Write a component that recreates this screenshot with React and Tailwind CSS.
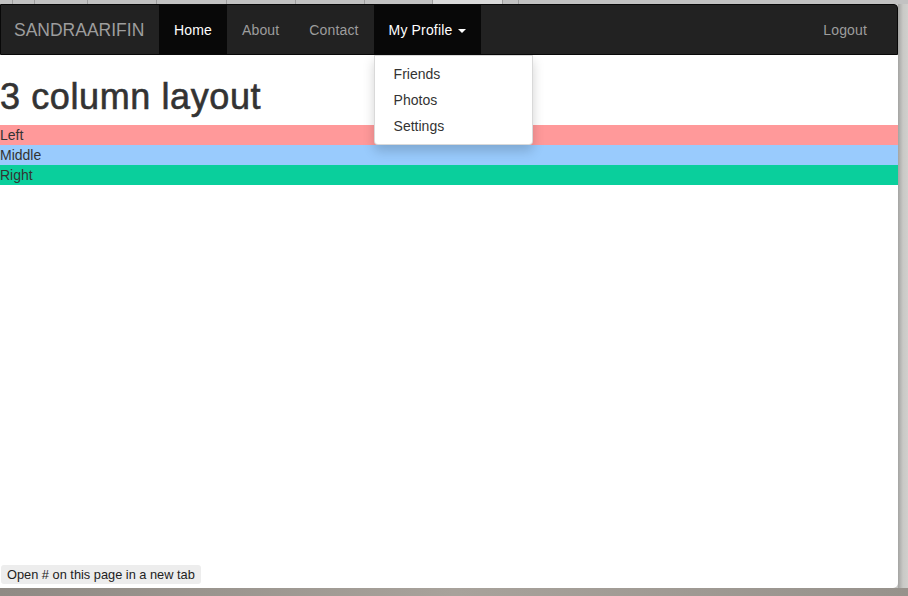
import React from "react";

const font = { fontFamily: '"Liberation Sans", Arial, sans-serif' };

const topLines = [13, 22, 53, 69, 70, 69, 69, 68, 70, 16];

const NavLink = ({ children, active }) => (
  <li
    className={
      "h-[49px] pt-[1px] px-[15px] leading-[48px] text-[14px] tracking-[0.15px] " +
      (active ? "bg-[#080808] text-white" : "text-[#9d9d9d]")
    }
  >
    {children}
  </li>
);

const rows = [
  { label: "Left", bg: "bg-[#ff999a]" },
  { label: "Middle", bg: "bg-[#99cbfd]" },
  { label: "Right", bg: "bg-[#0acf9c]" },
];

export default function App() {
  return (
    <div
      className="w-[908px] h-[596px] flex flex-col overflow-hidden bg-[#c6c6c4]"
      style={font}
    >
      {/* browser chrome behind window */}
      <div className="h-[4px] flex bg-[#c2c2c2]">
        {topLines.map((w, i) => (
          <div
            key={i}
            style={{ width: w }}
            className={
              "h-full border-r border-[#9e9e9e] " +
              (i === 8 ? "bg-[#dadada]" : "")
            }
          />
        ))}
      </div>

      <div className="flex h-[584px]">
        <div className="relative w-[898px] h-full bg-white rounded-tr-[4px] rounded-br-[5px]">
          <nav className="h-[51px] bg-[#222] border border-[#080808] rounded-tr-[4px] flex items-start">
            <div className="w-[158px] h-[49px] pt-[1px] pl-[13px] leading-[48px] text-[17.5px] text-[#9d9d9d]">
              SANDRAARIFIN
            </div>
            <ul className="flex">
              <NavLink active>Home</NavLink>
              <NavLink>About</NavLink>
              <NavLink>Contact</NavLink>
              <li className="relative h-[49px] pt-[1px] px-[15px] text-[14px] tracking-[0.15px] bg-[#080808] text-white flex items-center">
                My Profile
                <span className="ml-[6px] mt-[1px] w-0 h-0 border-x-[4px] border-x-transparent border-t-[4px] border-t-white" />
                <ul className="absolute left-0 top-[50px] w-[159px] py-[5px] bg-white border border-black/15 rounded-b-[4px] shadow-[0_6px_12px_rgba(0,0,0,0.175)] z-10 tracking-normal">
                  {["Friends", "Photos", "Settings"].map((t) => (
                    <li
                      key={t}
                      className="px-[19px] py-[3px] leading-[20px] text-[14px] text-[#333]"
                    >
                      {t}
                    </li>
                  ))}
                </ul>
              </li>
            </ul>
            <ul className="ml-auto pr-[15px] flex">
              <NavLink>Logout</NavLink>
            </ul>
          </nav>

          <h1 className="mt-[22px] mb-[8px] text-[36px] leading-[40px] text-[#333] tracking-[0.6px] [-webkit-text-stroke:0.6px_#333]">
            3 column layout
          </h1>
          {rows.map((r) => (
            <div
              key={r.label}
              className={r.bg + " h-[20px] leading-[20px] text-[14px] text-[#333]"}
            >
              {r.label}
            </div>
          ))}

          {/* status bubble */}
          <div className="absolute left-[1px] bottom-[4px] h-[19px] px-[6px] leading-[19px] text-[12.8px] text-[#222] bg-[#ededed] rounded-[3px]">
            Open # on this page in a new tab
          </div>
        </div>
        <div className="flex-1 bg-gradient-to-r from-[#a4a4a2] via-[#c9c9c6] to-[#d0d0cd]" />
      </div>

      <div className="flex-1 bg-gradient-to-r from-[#8f8a84] via-[#a8a29b] to-[#97928c]" />
    </div>
  );
}
